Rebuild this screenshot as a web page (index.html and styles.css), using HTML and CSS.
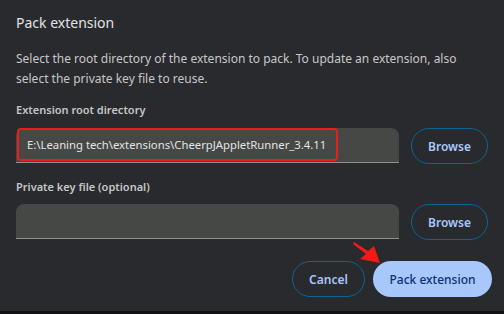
FILE: index.html
```html
<!DOCTYPE html>
<html>
<head>
<meta charset="utf-8">
<link rel="stylesheet" href="styles.css">
</head>
<body>
<div class="dialog">
  <h1 class="title">Pack extension</h1>
  <p class="desc">Select the root directory of the extension to pack. To update an extension, also select the private key file to reuse.</p>
  <div class="label first">Extension root directory</div>
  <div class="row">
    <div class="field"><span class="mark">E:\Leaning tech\extensions\CheerpJAppletRunner_3.4.11</span></div>
    <button class="btn outline">Browse</button>
  </div>
  <div class="label">Private key file (optional)</div>
  <div class="row">
    <div class="field"></div>
    <button class="btn outline">Browse</button>
  </div>
  <div class="actions">
    <button class="btn outline cancel">Cancel</button>
    <button class="btn primary">Pack extension</button>
  </div>
  <svg class="arrow" width="30" height="26" viewBox="0 0 30 26">
    <polygon points="2,1 16,10 22,5 28,22 8,18 14,13 1,3" fill="#f21b14"/>
  </svg>
</div>
<div class="edge"></div>
</body>
</html>
```
FILE: styles.css
```css
html, body {
  margin: 0;
  padding: 0;
  background: #292a2e;
  width: 504px;
  height: 314px;
  overflow: hidden;
}
.dialog {
  position: relative;
  height: 311px;
  box-sizing: border-box;
  padding: 12px 16px 0 16px;
  font-family: "Noto Sans", "Open Sans", sans-serif;
  color: #e3e3e3;
}
.title {
  margin: 0;
  font-size: 14px;
  font-weight: 400;
  line-height: 22px;
  color: #e3e3e3;
}
.desc {
  margin: 15px 0 0 0;
  font-size: 12px;
  line-height: 20px;
  color: #c7c7c7;
}
.label {
  margin: 15px 0 9px 0;
  font-size: 11px;
  font-weight: 600;
  line-height: 16px;
  color: #c4c7c5;
}
.label.first {
  margin-top: 13px;
  margin-bottom: 10px;
}
.row {
  display: flex;
  align-items: flex-start;
  gap: 12px;
}
.field {
  width: 383px;
  height: 35px;
  box-sizing: border-box;
  background: #464846;
  border-radius: 8px 8px 0 0;
  border-bottom: 1px solid #8e918f;
  font-size: 11.3px;
  line-height: 20px;
  color: #e3e3e3;
}
.mark {
  display: block;
  width: 321px;
  height: 33px;
  box-sizing: border-box;
  margin-left: 1px;
  border: 2px solid #ec1c1c;
  border-radius: 4px;
  padding: 5px 0 0 8px;
  white-space: nowrap;
}
.btn {
  font-family: "Noto Sans", "Open Sans", sans-serif;
  font-size: 12px;
  font-weight: 600;
  height: 36px;
  border-radius: 18px;
  padding: 0;
  cursor: pointer;
}
.outline {
  width: 77px;
  background: transparent;
  border: 1px solid #0d6595;
  color: #a8c7fa;
}
.actions {
  margin-top: 21px;
  display: flex;
  justify-content: flex-end;
  gap: 8px;
  margin-right: -4px;
}
.cancel {
  width: 73px;
}
.primary {
  width: 119px;
  background: #a8c7fa;
  border: none;
  color: #0a3172;
  font-weight: 500;
}
.arrow {
  position: absolute;
  left: 352px;
  top: 241px;
}
.edge {
  height: 3px;
  background: #111214;
}
```
